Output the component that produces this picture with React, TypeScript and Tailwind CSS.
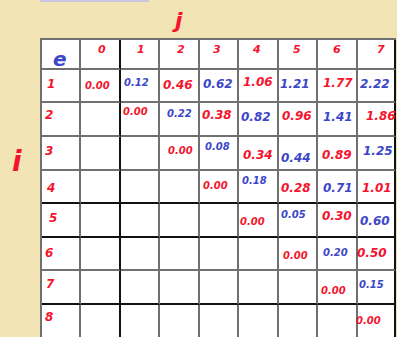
import React from 'react';

type Cell = { t: string; c: 'r' | 'b'; s: 'sm' | 'lg'; cls: string } | null;

const RED = 'text-[#f5142d]';
const BLUE = 'text-[#3c46c8]';

const COL_HEADS = [
  { t: '0', cls: 'ml-[17px] mt-[4px]' },
  { t: '1', cls: 'ml-[16px] mt-[3.5px]' },
  { t: '2', cls: 'ml-[17px] mt-[3.5px]' },
  { t: '3', cls: 'ml-[13px] mt-[3.5px]' },
  { t: '4', cls: 'ml-[14px] mt-[3.5px]' },
  { t: '5', cls: 'ml-[14px] mt-[3.5px]' },
  { t: '6', cls: 'ml-[15px] mt-[3.5px]' },
  { t: '7', cls: 'ml-[19px] mt-[3.5px]' },
];

const ROW_LABELS = [
  'ml-[5px] mt-[7.5px]',
  'ml-[3px] mt-[6px]',
  'ml-[3px] mt-[8px]',
  'ml-[5px] mt-[10.5px]',
  'ml-[7px] mt-[8px]',
  'ml-[3px] mt-[8.5px]',
  'ml-[4px] mt-[6.5px]',
  'ml-[3px] mt-[5.5px]',
];

// e[i][j] table, j = 0..7
const ROWS: Cell[][] = [
  [
    { t: '0.00', c: 'r', s: 'sm', cls: 'ml-[4px] mt-[11px]' },
    { t: '0.12', c: 'b', s: 'sm', cls: 'ml-[3px] mt-[7.5px]' },
    { t: '0.46', c: 'r', s: 'lg', cls: 'ml-[3px] mt-[9px]' },
    { t: '0.62', c: 'b', s: 'lg', cls: 'ml-[3px] mt-[8px]' },
    { t: '1.06', c: 'r', s: 'lg', cls: 'ml-[4px] mt-[6px]' },
    { t: '1.21', c: 'b', s: 'lg', cls: 'ml-[1px] mt-[8px]' },
    { t: '1.77', c: 'r', s: 'lg', cls: 'ml-[5px] mt-[7px]' },
    { t: '2.22', c: 'b', s: 'lg', cls: 'ml-[2px] mt-[8px]' },
  ],
  [
    null,
    { t: '0.00', c: 'r', s: 'sm', cls: 'ml-[2px] mt-[4px]' },
    { t: '0.22', c: 'b', s: 'sm', cls: 'ml-[7px] mt-[6px]' },
    { t: '0.38', c: 'r', s: 'lg', cls: 'ml-[2px] mt-[6px]' },
    { t: '0.82', c: 'b', s: 'lg', cls: 'ml-[2px] mt-[8px]' },
    { t: '0.96', c: 'r', s: 'lg', cls: 'ml-[3px] mt-[6.5px]' },
    { t: '1.41', c: 'b', s: 'lg', cls: 'ml-[5px] mt-[8px]' },
    { t: '1.86', c: 'r', s: 'lg', cls: 'ml-[8px] mt-[7px]' },
  ],
  [
    null,
    null,
    { t: '0.00', c: 'r', s: 'sm', cls: 'ml-[8px] mt-[9px]' },
    { t: '0.08', c: 'b', s: 'sm', cls: 'ml-[5px] mt-[4.5px]' },
    { t: '0.34', c: 'r', s: 'lg', cls: 'ml-[4px] mt-[12px]' },
    { t: '0.44', c: 'b', s: 'lg', cls: 'ml-[2px] mt-[14.5px]' },
    { t: '0.89', c: 'r', s: 'lg', cls: 'ml-[4px] mt-[11.5px]' },
    { t: '1.25', c: 'b', s: 'lg', cls: 'ml-[5px] mt-[7.5px]' },
  ],
  [
    null,
    null,
    null,
    { t: '0.00', c: 'r', s: 'sm', cls: 'ml-[3px] mt-[9.5px]' },
    { t: '0.18', c: 'b', s: 'sm', cls: 'ml-[3px] mt-[5px]' },
    { t: '0.28', c: 'r', s: 'lg', cls: 'ml-[2px] mt-[10.5px]' },
    { t: '0.71', c: 'b', s: 'lg', cls: 'ml-[5px] mt-[11px]' },
    { t: '1.01', c: 'r', s: 'lg', cls: 'ml-[4px] mt-[10.5px]' },
  ],
  [
    null,
    null,
    null,
    null,
    { t: '0.00', c: 'r', s: 'sm', cls: 'ml-[1px] mt-[12.5px]' },
    { t: '0.05', c: 'b', s: 'sm', cls: 'ml-[2px] mt-[6px]' },
    { t: '0.30', c: 'r', s: 'lg', cls: 'ml-[4px] mt-[5.5px]' },
    { t: '0.60', c: 'b', s: 'lg', cls: 'ml-[2px] mt-[10.5px]' },
  ],
  [
    null,
    null,
    null,
    null,
    null,
    { t: '0.00', c: 'r', s: 'sm', cls: 'ml-[4px] mt-[13px]' },
    { t: '0.20', c: 'b', s: 'sm', cls: 'ml-[5px] mt-[10px]' },
    { t: '0.50', c: 'r', s: 'lg', cls: '-ml-[1px] mt-[9px]' },
  ],
  [
    null,
    null,
    null,
    null,
    null,
    null,
    { t: '0.00', c: 'r', s: 'sm', cls: 'ml-[3px] mt-[14.5px]' },
    { t: '0.15', c: 'b', s: 'sm', cls: 'ml-[1px] mt-[9px]' },
  ],
  [
    null,
    null,
    null,
    null,
    null,
    null,
    null,
    { t: '0.00', c: 'r', s: 'sm', cls: '-ml-[2px] mt-[10.5px]' },
  ],
];

// column index 0 = row labels, 1..8 = j 0..7
const colBorder = (c: number) => (c === 1 || c === 8 ? 'border-r-[#111]' : 'border-r-[#707070]');
// row index 0 = header, 1..8 = i 1..8
const rowBorder = (r: number) => (r === 4 || r === 5 || r === 7 ? 'border-b-[#111]' : 'border-b-[#707070]');

const Val: React.FC<{ cell: NonNullable<Cell> }> = ({ cell }) => (
  <span
    className={`block leading-none whitespace-nowrap ${cell.s === 'sm' ? 'text-[10px]' : 'text-[12px]'} ${
      cell.c === 'r' ? RED : BLUE
    } ${cell.cls}`}
  >
    {cell.t}
  </span>
);

export default function App() {
  return (
    <div className="w-[397px] h-[337px] overflow-hidden bg-[#f2e4b4] flex flex-col font-['DejaVu_Sans',sans-serif] italic font-bold">
      <div className="h-[38px] flex flex-col shrink-0">
        <div className="ml-[40px] w-[109px] h-[2px] bg-[#cdc4e4]" />
        <div className={`ml-[175px] mt-[8px] text-[22px] leading-none ${RED}`}>j</div>
      </div>

      <div className="flex">
        <div className="w-[40px] shrink-0">
          <div className={`ml-[12px] mt-[110px] text-[28px] leading-none ${RED}`}>i</div>
        </div>

        <div className="w-[356px] shrink-0 border-l-2 border-t-2 border-l-[#707070] border-t-[#707070] grid grid-cols-[39px_40px_39px_40px_39px_40px_39px_40px_38px] grid-rows-[30px_33px_34px_34px_33px_34px_33px_34px_34px]">
          <div className={`bg-white border-r-2 border-b-2 ${colBorder(0)} ${rowBorder(0)}`}>
            <div className="ml-[11px] mt-[9px] text-[20px] leading-none text-[#3c46c8]">e</div>
          </div>
          {COL_HEADS.map((h, j) => (
            <div key={h.t} className={`bg-white border-r-2 border-b-2 ${colBorder(j + 1)} ${rowBorder(0)}`}>
              <span className={`block leading-none text-[11px] ${RED} ${h.cls}`}>{h.t}</span>
            </div>
          ))}

          {ROWS.map((row, i) => (
            <React.Fragment key={i}>
              <div className={`bg-white border-r-2 border-b-2 ${colBorder(0)} ${rowBorder(i + 1)}`}>
                <span className={`block leading-none text-[12px] ${RED} ${ROW_LABELS[i]}`}>{i + 1}</span>
              </div>
              {row.map((cell, j) => (
                <div
                  key={j}
                  className={`bg-white flex items-start border-r-2 border-b-2 ${colBorder(j + 1)} ${rowBorder(i + 1)}`}
                >
                  {cell && <Val cell={cell} />}
                </div>
              ))}
            </React.Fragment>
          ))}
        </div>
      </div>
    </div>
  );
}
